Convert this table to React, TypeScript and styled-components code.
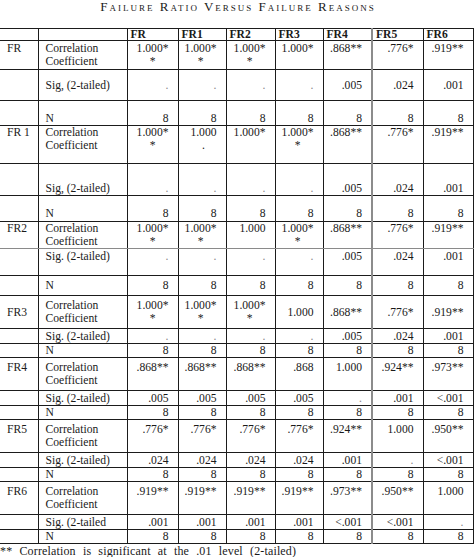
import React from 'react';
import styled, { createGlobalStyle } from 'styled-components';

const Global = createGlobalStyle`
  html, body { margin: 0; padding: 0; background: #ffffff; }
  body { width: 474px; height: 557px; overflow: hidden; }
`;

const Page = styled.div`
  width: 474px;
  height: 557px;
  overflow: hidden;
  display: flex;
  flex-direction: column;
  font-family: "Liberation Serif", "Times New Roman", serif;
  color: #1a1a1a;
  background: #ffffff;
`;

const Title = styled.div`
  flex: none;
  box-sizing: border-box;
  height: 28px;
  padding-left: 2px;
  text-align: center;
  font-size: 13px;
  line-height: 14px;
  font-variant: small-caps;
  letter-spacing: 2px;
`;

const Table = styled.table`
  flex: none;
  border-collapse: collapse;
  table-layout: fixed;
  width: 473px;
  font-size: 11.6px;
  line-height: 13px;
`;

type VA = 'top' | 'middle' | 'bottom';

const Row = styled.tr<{ $h: number; $va: VA; $pt: number; $pb: number; $soft?: boolean }>`
  height: ${(p) => p.$h}px;
  vertical-align: ${(p) => p.$va};
  & > td {
    padding-top: ${(p) => p.$pt}px;
    padding-bottom: ${(p) => p.$pb}px;
    ${(p) => (p.$soft ? 'border-bottom-color: #8a8a8a;' : '')}
  }
`;

const Cell = styled.td<{ $gray?: boolean }>`
  border: 1px solid #1b1b1b;
  ${(p) => (p.$gray ? 'border-right: 2px solid #8c8c8c;' : '')}
  overflow: visible;
  white-space: nowrap;
`;

const LabelCell = styled(Cell)`
  border-left: none;
  padding-left: 7px;
  padding-right: 0;
  text-align: left;
`;

const StatCell = styled(Cell)`
  padding-left: 7px;
  padding-right: 0;
  text-align: left;
`;

const ValueCell = styled(Cell)`
  padding-left: 0;
  padding-right: 9px;
  text-align: right;
`;

const HeadCell = styled(Cell)`
  padding: 0 0 0 3px;
  text-align: left;
  font-weight: bold;
  vertical-align: top;
  line-height: 11px;
`;

const Wrap = styled.span`
  display: inline-block;
  text-align: center;
`;

const Dot = styled.span`
  color: #8a8a8a;
`;

const Footnote = styled.div`
  flex: none;
  margin-top: 1px;
  font-size: 12px;
  line-height: 12px;
  letter-spacing: 0.15px;
  word-spacing: 4px;
  white-space: nowrap;
`;

interface RowSpec {
  h: number;
  va: VA;
  pt: number;
  pb: number;
  soft?: boolean;
}

interface Group {
  label: string;
  sigLabel: string;
  corr: string[];
  sig: string[];
  specs: [RowSpec, RowSpec, RowSpec];
}

const widths = [38, 89, 51, 48, 49, 48, 49, 51, 50];
const heads = ['FR', 'FR1', 'FR2', 'FR3', 'FR4', 'FR5', 'FR6'];
const dots = ['.', '.', '.', '.', '.005', '.024', '.001'];
const eights = ['8', '8', '8', '8', '8', '8', '8'];

const lower: [RowSpec, RowSpec, RowSpec] = [
  { h: 33, va: 'top', pt: 3, pb: 0 },
  { h: 15, va: 'middle', pt: 0, pb: 0 },
  { h: 14, va: 'middle', pt: 0, pb: 0 },
];

const groups: Group[] = [
  {
    label: 'FR',
    sigLabel: 'Sig, (2-tailed)',
    corr: ['1.000*\n*', '1.000*\n*', '1.000*\n*', '1.000*', '.868**', '.776*', '.919**'],
    sig: dots,
    specs: [
      { h: 29, va: 'top', pt: 1, pb: 0 },
      { h: 31, va: 'bottom', pt: 0, pb: 8 },
      { h: 25, va: 'bottom', pt: 0, pb: 0 },
    ],
  },
  {
    label: 'FR 1',
    sigLabel: 'Sig, (2-tailed)',
    corr: ['1.000*\n*', '1.000\n.', '1.000*', '1.000*\n*', '.868**', '.776*', '.919**'],
    sig: dots,
    specs: [
      { h: 38, va: 'top', pt: 0, pb: 0 },
      { h: 32, va: 'bottom', pt: 0, pb: 0 },
      { h: 26, va: 'bottom', pt: 0, pb: 1 },
    ],
  },
  {
    label: 'FR2',
    sigLabel: 'Sig. (2-tailed)',
    corr: ['1.000*\n*', '1.000*\n*', '1.000', '1.000*\n*', '.868**', '.776*', '.919**'],
    sig: dots,
    specs: [
      { h: 26, va: 'top', pt: 0, pb: 0, soft: true },
      { h: 27, va: 'top', pt: 1, pb: 0 },
      { h: 20, va: 'middle', pt: 0, pb: 0 },
    ],
  },
  {
    label: 'FR3',
    sigLabel: 'Sig. (2-tailed)',
    corr: ['1.000*\n*', '1.000*\n*', '1.000*\n*', '1.000', '.868**', '.776*', '.919**'],
    sig: dots,
    specs: [{ h: 33, va: 'middle', pt: 0, pb: 0 }, lower[1], lower[2]],
  },
  {
    label: 'FR4',
    sigLabel: 'Sig. (2-tailed)',
    corr: ['.868**', '.868**', '.868**', '.868', '1.000', '.924**', '.973**'],
    sig: ['.005', '.005', '.005', '.005', '.', '.001', '<.001'],
    specs: lower,
  },
  {
    label: 'FR5',
    sigLabel: 'Sig. (2-tailed)',
    corr: ['.776*', '.776*', '.776*', '.776*', '.924**', '1.000', '.950**'],
    sig: ['.024', '.024', '.024', '.024', '.001', '.', '<.001'],
    specs: lower,
  },
  {
    label: 'FR6',
    sigLabel: 'Sig. (2-tailed',
    corr: ['.919**', '.919**', '.919**', '.919**', '.973**', '.950**', '1.000'],
    sig: ['.001', '.001', '.001', '.001', '<.001', '<.001', '.'],
    specs: lower,
  },
];

const Value: React.FC<{ text: string }> = ({ text }) => {
  if (text === '.') return <Dot>.</Dot>;
  if (text.includes('\n')) {
    const [a, b] = text.split('\n');
    return (
      <Wrap>
        {a}
        <br />
        {b}
      </Wrap>
    );
  }
  return <>{text}</>;
};

const ValueRow: React.FC<{ values: string[] }> = ({ values }) => (
  <>
    {values.map((v, i) => (
      <ValueCell key={i} $gray={i === 4}>
        <Value text={v} />
      </ValueCell>
    ))}
  </>
);

export default function App() {
  return (
    <>
      <Global />
      <Page>
        <Title>Failure Ratio Versus Failure Reasons</Title>
        <Table>
          <colgroup>
            {widths.map((w, i) => (
              <col key={i} style={{ width: w }} />
            ))}
          </colgroup>
          <tbody>
            <Row $h={11} $va="top" $pt={0} $pb={0}>
              <LabelCell />
              <StatCell />
              {heads.map((h, i) => (
                <HeadCell key={h} $gray={i === 4}>
                  {h}
                </HeadCell>
              ))}
            </Row>
            {groups.map((g) => {
              const [c, s, n] = g.specs;
              return (
                <React.Fragment key={g.label}>
                  <Row $h={c.h} $va={c.va} $pt={c.pt} $pb={c.pb} $soft={c.soft}>
                    <LabelCell>{g.label}</LabelCell>
                    <StatCell>
                      Correlation
                      <br />
                      Coefficient
                    </StatCell>
                    <ValueRow values={g.corr} />
                  </Row>
                  <Row $h={s.h} $va={s.va} $pt={s.pt} $pb={s.pb}>
                    <LabelCell />
                    <StatCell>{g.sigLabel}</StatCell>
                    <ValueRow values={g.sig} />
                  </Row>
                  <Row $h={n.h} $va={n.va} $pt={n.pt} $pb={n.pb}>
                    <LabelCell />
                    <StatCell>N</StatCell>
                    <ValueRow values={eights} />
                  </Row>
                </React.Fragment>
              );
            })}
          </tbody>
        </Table>
        <Footnote>** Correlation is significant at the .01 level (2-tailed)</Footnote>
      </Page>
    </>
  );
}
